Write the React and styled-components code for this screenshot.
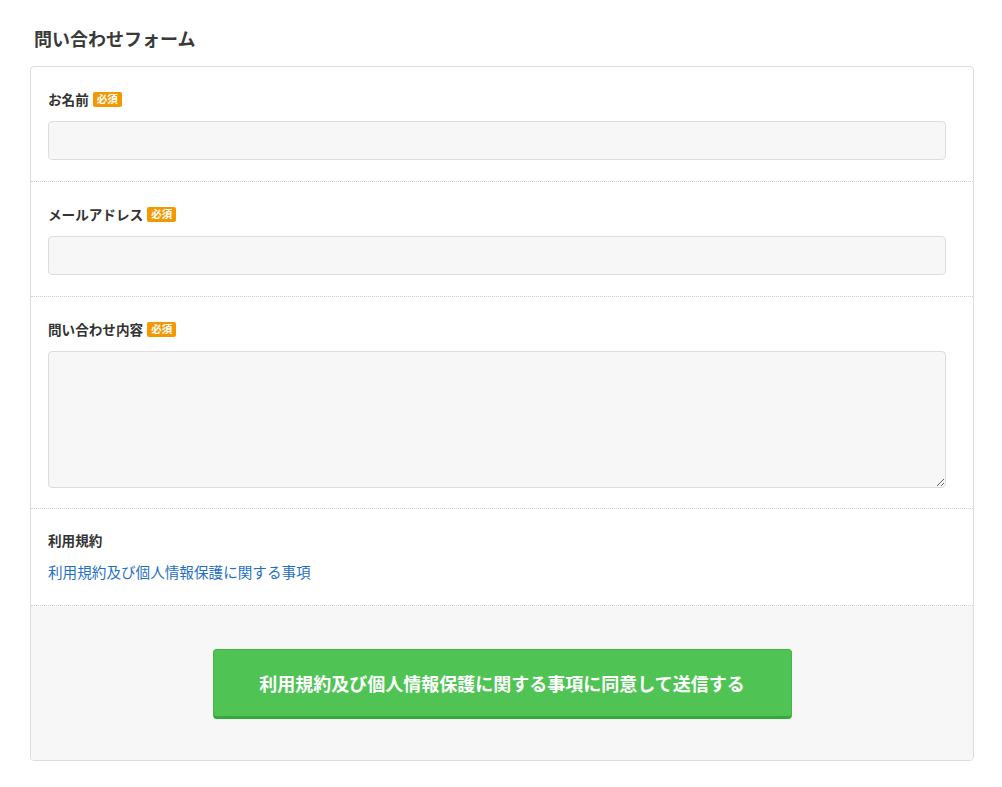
import React from "react";
import styled, { createGlobalStyle } from "styled-components";

const Global = createGlobalStyle`
  html, body { margin: 0; padding: 0; background: #fff; }
  body { font-family: "Noto Sans CJK JP", "Noto Sans", sans-serif; color: #333; }
  * { box-sizing: border-box; }
`;

const Page = styled.div`
  padding: 26px 28px 26px 30px;
`;

const Title = styled.h2`
  margin: 0 0 16px 4px;
  font-size: 18px;
  line-height: 24px;
  font-weight: 700;
  color: #3a3a3a;
`;

const Card = styled.div`
  border: 1px solid #dcdcdc;
  border-radius: 4px;
  overflow: hidden;
  background: #fff;
`;

const Section = styled.div`
  padding: ${(p) => p.$pt || 22}px 27px ${(p) => p.$pb || 21}px 17px;
  border-bottom: 1px dotted #cfcfcf;
`;

const Label = styled.div`
  display: flex;
  align-items: center;
  gap: 4px;
  font-size: 13.6px;
  line-height: 20px;
  font-weight: 700;
  color: #333;
  margin-bottom: 12px;
`;

const Badge = styled.span`
  display: inline-flex;
  align-items: center;
  justify-content: center;
  width: 29px;
  height: 15px;
  border-radius: 2px;
  background: #f39800;
  color: #fff;
  font-size: 10.5px;
  font-weight: 700;
  line-height: 1;
`;

const Input = styled.input`
  display: block;
  width: 100%;
  height: 39px;
  background: #f7f7f7;
  border: 1px solid #dddddd;
  border-radius: 4px;
  outline: none;
  font: inherit;
`;

const TextArea = styled.textarea`
  display: block;
  width: 100%;
  height: 137px;
  background: #f7f7f7;
  border: 1px solid #dddddd;
  border-radius: 4px;
  outline: none;
  font: inherit;
`;

const Link = styled.a`
  display: block;
  font-size: 14.6px;
  line-height: 20px;
  color: #1f6fc4;
  text-decoration: none;
`;

const Footer = styled.div`
  background: #f7f7f7;
  display: flex;
  justify-content: center;
  padding: 43px 0 41px;
`;

const Button = styled.button`
  width: 579px;
  height: 70px;
  background: #4fc454;
  border: 1px solid #44b548;
  border-bottom: 3px solid #35a838;
  border-radius: 4px;
  color: #fff;
  font-family: inherit;
  font-size: 18px;
  font-weight: 700;
  cursor: pointer;
  padding: 0;
`;

export default function App() {
  return (
    <Page>
      <Global />
      <Title>問い合わせフォーム</Title>
      <Card>
        <Section>
          <Label>
            お名前<Badge>必須</Badge>
          </Label>
          <Input type="text" />
        </Section>
        <Section>
          <Label>
            メールアドレス<Badge>必須</Badge>
          </Label>
          <Input type="email" />
        </Section>
        <Section $pb={20}>
          <Label>
            問い合わせ内容<Badge>必須</Badge>
          </Label>
          <TextArea />
        </Section>
        <Section $pt={21} $pb={23}>
          <Label>利用規約</Label>
          <Link href="#">利用規約及び個人情報保護に関する事項</Link>
        </Section>
        <Footer>
          <Button>利用規約及び個人情報保護に関する事項に同意して送信する</Button>
        </Footer>
      </Card>
    </Page>
  );
}
